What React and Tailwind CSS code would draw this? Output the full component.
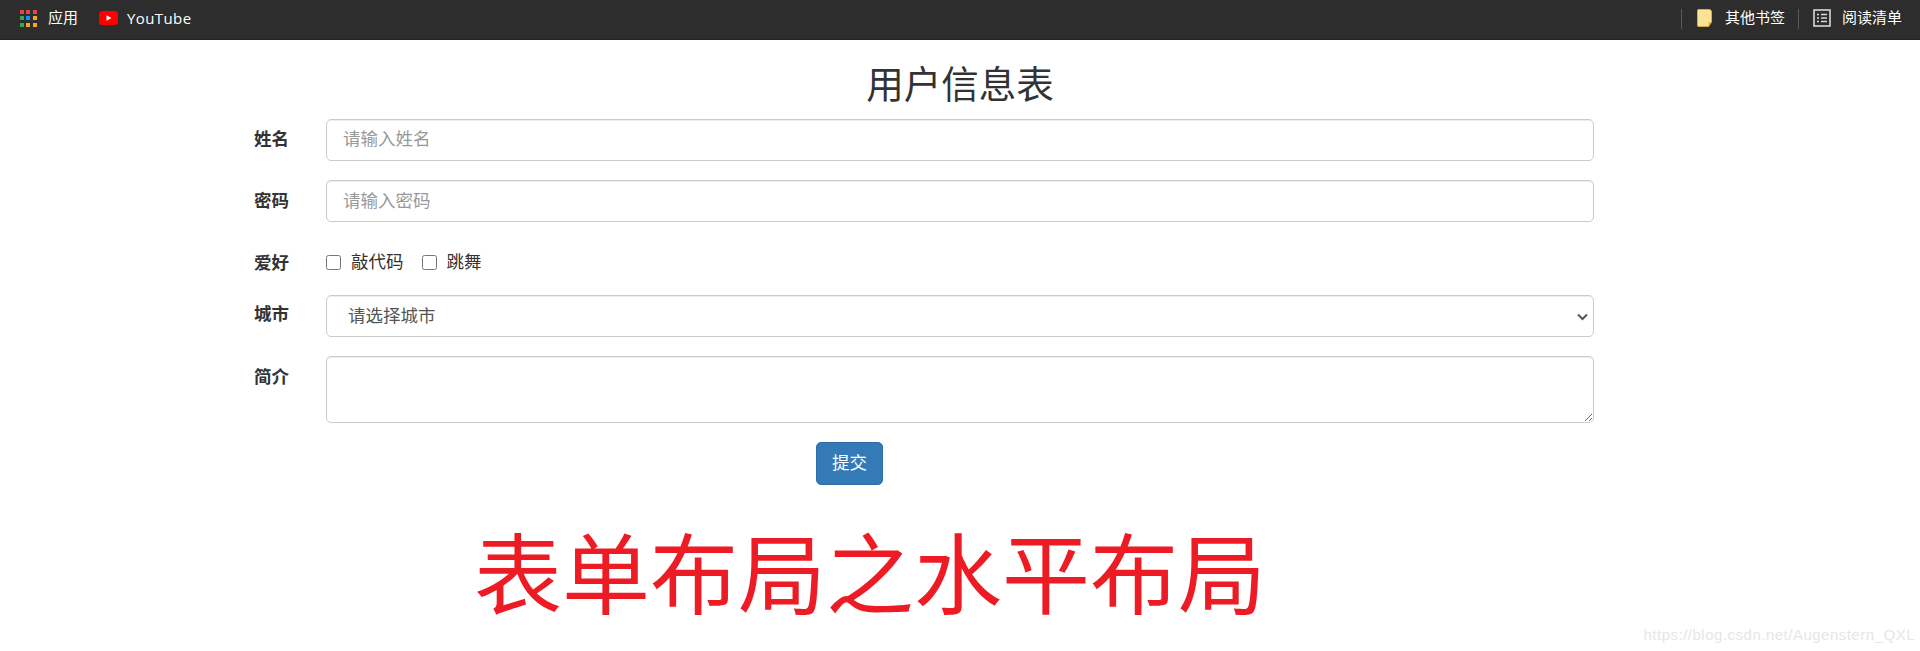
const cjk = 'font-["Liberation_Sans","Noto_Sans_CJK_SC",sans-serif]'

function AppsIcon() {
  const colors = ['#e8453c', '#e8453c', '#e8453c', '#34a853', '#1a8cff', '#f5a623', '#34a853', '#f5a623', '#f5a623']
  return (
    <div className="grid grid-cols-3 gap-[2px] w-[17px] h-[17px]">
      {colors.map((c, i) => (
        <span key={i} className="w-[4px] h-[4px]" style={{ backgroundColor: c }} />
      ))}
    </div>
  )
}

function YoutubeIcon() {
  return (
    <svg width="19" height="14" viewBox="0 0 19 14">
      <rect x="0" y="0" width="19" height="14" rx="3.5" fill="#f00" />
      <path d="M7.5 4.2 L12.5 7 L7.5 9.8 Z" fill="#fff" />
    </svg>
  )
}

function FolderIcon() {
  return (
    <svg width="16" height="18" viewBox="0 0 16 18">
      <path d="M1.5 0.5 H12 Q14.5 0.5 14.5 3 V12.5 L11.5 17.5 H1.5 Q0.5 17.5 0.5 16.5 V1.5 Q0.5 0.5 1.5 0.5 Z" fill="#fde293" stroke="#e8b93e" strokeWidth="0.8" />
      <path d="M11.5 17.5 V13 H15 Z" fill="#e8b93e" />
    </svg>
  )
}

function ReadingIcon() {
  return (
    <svg width="18" height="18" viewBox="0 0 18 18" fill="none" stroke="#d8d8d8">
      <rect x="1" y="1" width="16" height="16" strokeWidth="1.6" />
      <path d="M4 5.5 H6 M4 9 H6 M4 12.5 H6 M8 5.5 H14 M8 9 H14 M8 12.5 H14" strokeWidth="1.4" />
    </svg>
  )
}

function Row({ label, className = '', labelClass = '', children }) {
  return (
    <div className={`flex ${className}`}>
      <label className={`w-[72px] shrink-0 text-[17.5px] font-bold text-[#333] ${labelClass}`}>{label}</label>
      <div className="w-[1268px]">{children}</div>
    </div>
  )
}

const field = 'block w-full rounded-[5px] border border-[#ccc] bg-white text-[17.5px] text-[#555] shadow-[inset_0_1px_1px_rgba(0,0,0,0.075)] outline-none'

export default function App() {
  return (
    <div className={`relative h-[651px] overflow-hidden bg-white ${cjk}`}>
      <div className="flex h-10 items-center justify-between bg-[#2d2d2d] border-b border-[#222] pb-[3px] text-[15px] text-white">
        <div className="flex items-center">
          <div className="ml-5 mt-[1px]"><AppsIcon /></div>
          <span className="ml-[11px]">应用</span>
          <div className="ml-[21px] flex"><YoutubeIcon /></div>
          <span className="ml-[9px] font-['Open_Sans'] tracking-[0.4px]">YouTube</span>
        </div>
        <div className="flex items-center">
          <div className="w-px h-5 bg-[#5a5a5a] mt-[1px]" />
          <div className="ml-[15px] flex"><FolderIcon /></div>
          <span className="ml-[12px]">其他书签</span>
          <div className="ml-[13px] w-px h-5 bg-[#5a5a5a] mt-[1px]" />
          <div className="ml-[14px] flex"><ReadingIcon /></div>
          <span className="ml-[11px] mr-[18px]">阅读清单</span>
        </div>
      </div>

      <h2 className="mt-[20px] h-[50px] text-center text-[37.5px] leading-[50px] font-normal text-[#333]">用户信息表</h2>

      <form className="ml-[254px] mt-[9px]">
        <Row label="姓名" labelClass="pt-[7px]">
          <input className={`${field} h-[42px] px-[16px] placeholder:text-[#999] leading-[38px] pb-[2px]`} placeholder="请输入姓名" />
        </Row>
        <Row label="密码" className="mt-[19px]" labelClass="pt-[8px]">
          <input className={`${field} h-[42px] px-[16px] placeholder:text-[#999]`} placeholder="请输入密码" />
        </Row>
        <Row label="爱好" className="mt-[27px] h-[46px]" labelClass="pt-[1px]">
          <div className="flex items-center h-[27px] text-[17.5px] text-[#333]">
            <input type="checkbox" className="w-[15px] h-[15px] m-0" />
            <span className="ml-[10px]">敲代码</span>
            <input type="checkbox" className="w-[15px] h-[15px] ml-[18px]" />
            <span className="ml-[10px]">跳舞</span>
          </div>
        </Row>
        <Row label="城市" labelClass="pt-[6px]">
          <div className="relative">
            <select className={`${field} h-[42px] pl-[21px] pr-8 appearance-none`} defaultValue="">
              <option value="">请选择城市</option>
            </select>
            <svg className="absolute right-[6px] top-[18px] pointer-events-none" width="11" height="8" viewBox="0 0 11 8" fill="none" stroke="#555" strokeWidth="2">
              <path d="M1 1.5 L5.5 6 L10 1.5" />
            </svg>
          </div>
        </Row>
        <Row label="简介" className="mt-[19px]" labelClass="pt-[8px]">
          <textarea className={`${field} h-[67px] px-[16px] py-2`} />
        </Row>
        <button type="button" className="ml-[562px] mt-[19px] block w-[67px] h-[43px] rounded-[5px] border border-[#2e6da4] bg-[#337ab7] text-[17.5px] text-white">提交</button>
      </form>

      <div className="mt-[36px] ml-[474px] text-[88px] leading-[112px] text-[#ed1c24]">表单布局之水平布局</div>

      <div className="absolute right-[5px] bottom-[5px] text-[15px] tracking-[0.5px] text-[#e6e6e6]">https://blog.csdn.net/Augenstern_QXL</div>
    </div>
  )
}
